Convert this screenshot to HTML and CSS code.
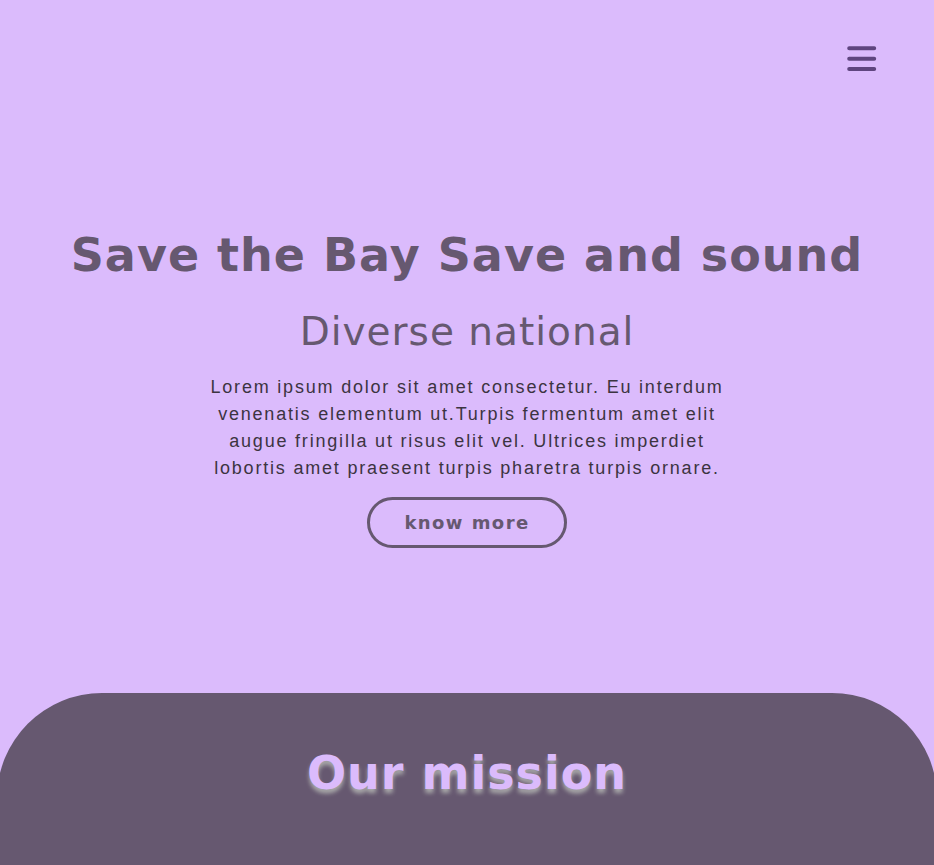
FILE: index.html
```html
<!DOCTYPE html>
<html lang="en">
<head>
<meta charset="utf-8">
<meta name="viewport" content="width=device-width, initial-scale=1">
<title>Save the Bay</title>
<link rel="stylesheet" href="styles.css">
</head>
<body>
<header class="topbar">
<button class="menu" type="button" aria-label="Menu">
<svg viewBox="0 0 30 26" width="30" height="26" aria-hidden="true"><path d="M2.2 2.3h25M2.2 12.7h25M2.2 23h25"/></svg>
</button>
</header>
<main>
<section class="hero">
<h1 class="hero-title">Save the Bay Save and sound</h1>
<h2 class="hero-subtitle">Diverse national</h2>
<p class="hero-text">Lorem ipsum dolor sit amet consectetur. Eu interdum venenatis elementum ut.Turpis fermentum amet elit augue fringilla ut risus elit vel. Ultrices imperdiet lobortis amet praesent turpis pharetra turpis ornare.</p>
<a class="more" href="#mission">know more</a>
</section>
<section class="mission" id="mission">
<h2 class="mission-title">Our mission</h2>
</section>
</main>
</body>
</html>
```
FILE: styles.css
```css
* {
  box-sizing: border-box;
  margin: 0;
}

body {
  display: flex;
  flex-direction: column;
  min-height: 100vh;
  background: #dbbbfc;
  color: #665870;
  font-family: Verdana, "DejaVu Sans", sans-serif;
  letter-spacing: 1px;
}

.topbar {
  display: flex;
  justify-content: flex-end;
  padding: 46px 57px 0;
}

.menu {
  display: flex;
  padding: 0;
  border: 0;
  background: none;
  cursor: pointer;
}

.menu path {
  fill: none;
  stroke: #5f457f;
  stroke-width: 4;
  stroke-linecap: round;
}

main {
  display: flex;
  flex: 1;
  flex-direction: column;
  overflow-x: clip;
}

.hero {
  display: flex;
  flex-direction: column;
  align-items: center;
  padding: 155px 24px 145px;
  text-align: center;
}

.hero-title {
  font-size: 46px;
  line-height: 56px;
}

.hero-subtitle {
  margin-top: 25px;
  font-size: 39px;
  font-weight: 400;
  line-height: 48px;
}

.hero-text {
  max-width: 520px;
  margin-top: 18px;
  color: #3c3441;
  font-family: "Liberation Sans", Arial, sans-serif;
  font-size: 18px;
  letter-spacing: 0.1em;
  line-height: 27px;
}

.more {
  margin-top: 15px;
  padding: 12px 34px;
  border: 3px solid #665870;
  border-radius: 26px;
  color: #665870;
  font-size: 18px;
  font-weight: 700;
  letter-spacing: 0.08em;
  line-height: 21px;
  text-decoration: none;
}

.mission {
  flex: 1;
  margin: 0 -3px;
  padding: 52px 24px 64px;
  border-radius: 105px 105px 0 0;
  background: #665870;
  text-align: center;
}

.mission-title {
  color: #dbbbfc;
  font-size: 46px;
  line-height: 56px;
  text-shadow: 0 4px 4px #aaa;
}
```
